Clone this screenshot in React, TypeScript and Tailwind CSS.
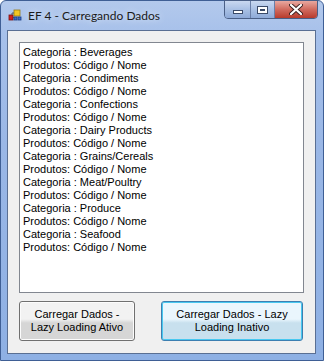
import React from "react";

const lines = [
  "Categoria : Beverages",
  "Produtos: Código / Nome",
  "Categoria : Condiments",
  "Produtos: Código / Nome",
  "Categoria : Confections",
  "Produtos: Código / Nome",
  "Categoria : Dairy Products",
  "Produtos: Código / Nome",
  "Categoria : Grains/Cereals",
  "Produtos: Código / Nome",
  "Categoria : Meat/Poultry",
  "Produtos: Código / Nome",
  "Categoria : Produce",
  "Produtos: Código / Nome",
  "Categoria : Seafood",
  "Produtos: Código / Nome",
];

function AppIcon() {
  return (
    <svg width="14" height="14" viewBox="0 0 14 14">
      <rect x="1" y="7" width="4" height="5" fill="#d42020" stroke="#7a1010" strokeWidth="0.8" />
      <rect x="6" y="2" width="6" height="6" fill="#f3c623" stroke="#9a7a10" strokeWidth="0.8" />
      <rect x="6" y="9" width="3" height="3" fill="#3a6fd0" stroke="#1c3c80" strokeWidth="0.8" />
      <rect x="10" y="9" width="3" height="3" fill="#3a6fd0" stroke="#1c3c80" strokeWidth="0.8" />
      <path d="M5 9.5 H6 M4 7 V5 H6" stroke="#444" strokeWidth="0.8" fill="none" />
    </svg>
  );
}

export default function App() {
  return (
    <div
      className="relative w-[324px] h-[361px] flex flex-col rounded-t-[6px] border border-[#3f5f95]"
      style={{
        background:
          "linear-gradient(180deg, #b3c9ec 0%, #a6c0ea 10%, #9ab7e6 40%, #8eb0e4 100%)",
        fontFamily: '"Liberation Sans", Arial, sans-serif',
      }}
    >
      {/* title bar */}
      <div className="h-[29px] flex items-start relative">
        <div className="pl-[7px] pt-[7px] flex items-center">
          <AppIcon />
          <span
            className="ml-[5px] text-[12px] text-[#1a1a1a] leading-none pt-[1px] px-[1px] rounded"
            style={{ fontFamily: 'Lato, "Noto Sans", sans-serif', textShadow: "0 0 6px #e4ecf8" }}
          >
            EF 4 - Carregando Dados
          </span>
        </div>
        {/* caption buttons */}
        <div className="absolute right-[5px] top-[-1px] flex h-[19px] rounded-b-[4px] border border-[#4a5f86] overflow-hidden">
          <div className="w-[26px] h-full flex items-center justify-center border-r border-[#6a7fa8] bg-gradient-to-b from-[#c9d8f0] via-[#a9c0e4] to-[#8eaad8]">
            <div className="w-[10px] h-[4px] bg-white border border-[#3a4a68] mt-[5px]" />
          </div>
          <div className="w-[24px] h-full flex items-center justify-center border-r border-[#6a7fa8] bg-gradient-to-b from-[#c9d8f0] via-[#a9c0e4] to-[#8eaad8]">
            <div className="w-[11px] h-[8px] bg-white border border-[#3a4a68] flex items-center justify-center">
              <div className="w-[5px] h-[2px] bg-[#3a4a68]" />
            </div>
          </div>
          <div className="w-[42px] h-full flex items-center justify-center bg-gradient-to-b from-[#e8a8a0] via-[#d06a5e] to-[#b83a2c]">
            <svg width="14" height="11" viewBox="0 0 14 11">
              <path d="M2 1 L12 10 M12 1 L2 10" stroke="#3a2020" strokeWidth="4" strokeLinecap="round" />
              <path d="M2 1 L12 10 M12 1 L2 10" stroke="#ffffff" strokeWidth="2.2" strokeLinecap="round" />
            </svg>
          </div>
        </div>
      </div>

      {/* client area */}
      <div className="ml-[6px] mr-[7px] h-[324px] border border-[#5a6f93] bg-[#f0f0f0] flex flex-col px-[11px] pt-[11px]">
        <div className="h-[251px] bg-white border border-[#828790] pl-[3px] pt-[3px] text-[11px] leading-[13px] text-black">
          {lines.map((l, i) => (
            <div key={i} className="whitespace-nowrap">{l}</div>
          ))}
        </div>
        <div className="flex mt-[8px] gap-[26px]">
          <div className="w-[116px] h-[40px] rounded-[3px] border border-[#707070] bg-gradient-to-b from-[#f2f2f2] from-45% to-[#d6d6d6] to-55% flex items-center justify-center text-center text-[11px] leading-[13px] text-black shadow-[inset_0_0_0_1px_#fcfcfc]">
            <div>Carregar Dados -<br />Lazy Loading Ativo</div>
          </div>
          <div className="w-[142px] h-[40px] rounded-[3px] border border-[#3c7fb1] bg-gradient-to-b from-[#eaf6fd] from-45% to-[#c8e0ee] to-55% flex items-center justify-center text-center text-[11px] leading-[13px] text-black shadow-[inset_0_0_0_1px_#48c8f0]">
            <div>Carregar Dados - Lazy<br />Loading Inativo</div>
          </div>
        </div>
      </div>
    </div>
  );
}
